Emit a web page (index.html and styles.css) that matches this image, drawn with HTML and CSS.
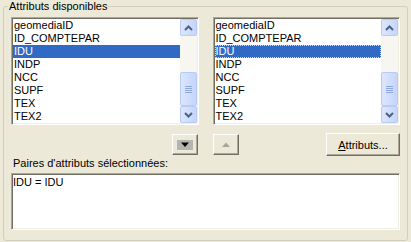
FILE: index.html
```html
<!DOCTYPE html>
<html lang="fr">
<head>
  <meta charset="UTF-8" />
  <title>Attributs</title>
  <link rel="stylesheet" href="styles.css">
</head>
<body>

  <fieldset class="group">
    <legend>Attributs disponibles</legend>
    <div class="group-body">

      <div class="lists">
        <div class="listbox">
          <ul class="items">
            <li>geomediaID</li>
            <li>ID_COMPTEPAR</li>
            <li class="selected">IDU</li>
            <li>INDP</li>
            <li>NCC</li>
            <li>SUPF</li>
            <li>TEX</li>
            <li>TEX2</li>
          </ul>
          <div class="scrollbar">
            <div class="sb-btn">
              <svg width="9" height="6" viewBox="0 0 9 6"><path d="M1 5 L4.5 1.5 L8 5" fill="none" stroke="#4d6185" stroke-width="2"/></svg>
            </div>
            <div class="sb-track">
              <div class="sb-thumb">
                <svg width="7" height="8" viewBox="0 0 7 8"><path d="M0 1.5h7M0 3.5h7M0 5.5h7M0 7.5h7" stroke="#8fa8e0" stroke-width="1"/></svg>
              </div>
            </div>
            <div class="sb-btn">
              <svg width="9" height="6" viewBox="0 0 9 6"><path d="M1 1 L4.5 4.5 L8 1" fill="none" stroke="#4d6185" stroke-width="2"/></svg>
            </div>
          </div>
        </div>

        <div class="listbox">
          <ul class="items">
            <li>geomediaID</li>
            <li>ID_COMPTEPAR</li>
            <li class="selected focused">IDU</li>
            <li>INDP</li>
            <li>NCC</li>
            <li>SUPF</li>
            <li>TEX</li>
            <li>TEX2</li>
          </ul>
          <div class="scrollbar">
            <div class="sb-btn">
              <svg width="9" height="6" viewBox="0 0 9 6"><path d="M1 5 L4.5 1.5 L8 5" fill="none" stroke="#4d6185" stroke-width="2"/></svg>
            </div>
            <div class="sb-track">
              <div class="sb-thumb">
                <svg width="7" height="8" viewBox="0 0 7 8"><path d="M0 1.5h7M0 3.5h7M0 5.5h7M0 7.5h7" stroke="#8fa8e0" stroke-width="1"/></svg>
              </div>
            </div>
            <div class="sb-btn">
              <svg width="9" height="6" viewBox="0 0 9 6"><path d="M1 1 L4.5 4.5 L8 1" fill="none" stroke="#4d6185" stroke-width="2"/></svg>
            </div>
          </div>
        </div>
      </div>

      <div class="actions">
        <div class="actions-left">
          <button class="arrow-btn">
            <svg width="16" height="10" viewBox="0 0 16 10"><rect width="16" height="10" fill="#b4b4b0"/><path d="M4 2.5h8L8 7z" fill="#000"/></svg>
          </button>
        </div>
        <div class="actions-right">
          <button class="arrow-btn" disabled>
            <svg width="16" height="10" viewBox="0 0 16 10"><path d="M4 7h8L8 2.5z" fill="#a8a69c"/></svg>
          </button>
          <button class="attr-btn"><u>A</u>ttributs...</button>
        </div>
      </div>

      <div class="pairs-label">Paires d'attributs sélectionnées:</div>
      <div class="pairs">IDU = IDU</div>

    </div>
  </fieldset>

</body>
</html>
```

FILE: styles.css
```css
body {
  margin: 0;
  background: #ece9d8;
  font-family: "Liberation Sans", Arial, sans-serif;
  font-size: 11px;
  color: #000;
}

.group {
  margin: 0 3px;
  padding: 0;
  min-width: 0;
  border: 1px solid #d0d0bf;
  border-radius: 3px;
}

.group legend {
  margin-left: 4px;
  padding: 0 1px;
  line-height: 13px;
}

.group-body {
  padding: 4px 7px 10px;
}

.lists {
  display: grid;
  grid-template-columns: 1fr 1fr;
  column-gap: 14px;
}

.listbox,
.pairs {
  background: #fff;
  border: 1px solid;
  border-color: #aca899 #fff #fff #aca899;
  box-shadow: inset 1px 1px #716f64, inset -1px -1px #f1efe2;
}

.listbox {
  display: flex;
  height: 104px;
  padding: 1px;
  overflow: hidden;
}

.items {
  flex: 1;
  list-style: none;
  margin: 0;
  padding: 0;
  overflow: hidden;
}

.items li {
  height: 13px;
  line-height: 13px;
  padding-left: 1px;
  white-space: nowrap;
}

.items li.selected {
  background: #316ac5;
  color: #fff;
}

.items li.focused {
  outline: 1px dotted #c9d8f3;
  outline-offset: -1px;
}

.scrollbar {
  width: 17px;
  display: flex;
  flex-direction: column;
  background: #f7f6f1;
}

.sb-btn,
.sb-thumb {
  display: flex;
  align-items: center;
  justify-content: center;
  border: 1px solid #b9cbf3;
  border-radius: 2px;
  background: linear-gradient(to right, #dce7fd, #c5d5fb);
}

.sb-btn {
  height: 15px;
}

.sb-track {
  flex: 1;
  display: flex;
  flex-direction: column;
  justify-content: flex-end;
}

.sb-thumb {
  height: 32px;
}

.actions {
  display: grid;
  grid-template-columns: 1fr 1fr;
  column-gap: 14px;
  margin-top: 8px;
  height: 23px;
}

.actions-left {
  display: flex;
  justify-content: flex-end;
  align-items: flex-start;
  padding-right: 1px;
}

.actions-right {
  display: flex;
  justify-content: space-between;
  align-items: flex-start;
}

.arrow-btn,
.attr-btn {
  font: inherit;
  color: #000;
  background: #ece9d8;
  border: 1px solid;
  border-color: #fff #716f64 #716f64 #fff;
  box-shadow: inset -1px -1px #aca899;
  padding: 0;
}

.arrow-btn {
  width: 26px;
  height: 21px;
  display: flex;
  align-items: center;
  justify-content: center;
  margin-top: 1px;
}

.attr-btn {
  width: 74px;
  height: 23px;
}

.pairs-label {
  line-height: 13px;
  margin-top: 1px;
  padding-left: 2px;
}

.pairs {
  margin-top: 3px;
  height: 51px;
  padding: 2px 1px;
  line-height: 13px;
}
```
